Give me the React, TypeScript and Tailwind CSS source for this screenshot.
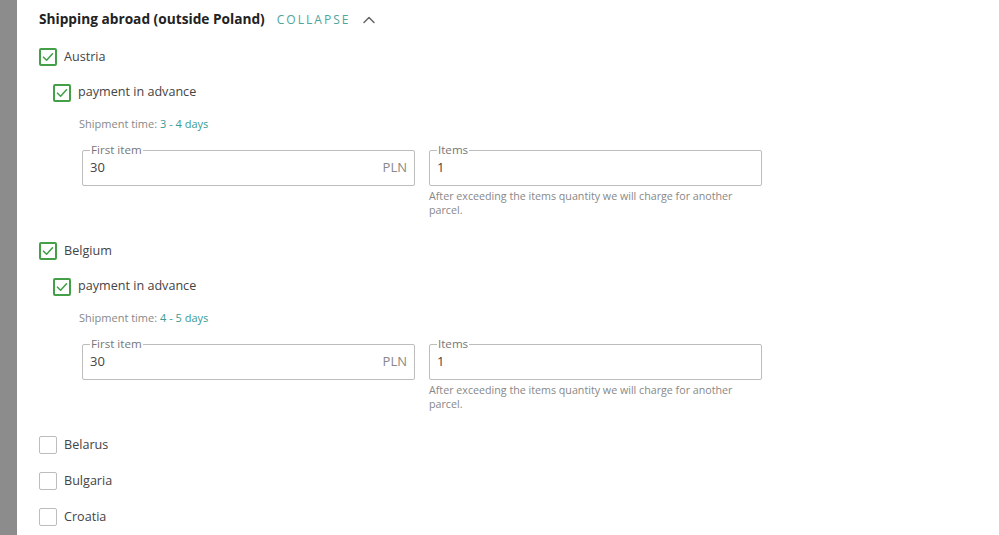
import { ChevronUp } from "lucide-react";

type Country = {
  name: string;
  checked: boolean;
  time?: string;
};

const countries: Country[] = [
  { name: "Austria", checked: true, time: "3 - 4 days" },
  { name: "Belgium", checked: true, time: "4 - 5 days" },
  { name: "Belarus", checked: false },
  { name: "Bulgaria", checked: false },
  { name: "Croatia", checked: false },
];

function Checkbox({ checked }: { checked: boolean }) {
  return (
    <span
      className={
        checked
          ? "flex h-[18px] w-[18px] shrink-0 items-center justify-center rounded-[2px] border-2 border-[#43a047] bg-white"
          : "flex h-[18px] w-[18px] shrink-0 items-center justify-center rounded-[2px] border border-[#bdbdbd] bg-white"
      }
    >
      {checked && (
        <svg width="12" height="12" viewBox="0 0 12 12" fill="none">
          <polyline
            points="1.5,6.2 4.6,9.2 10.5,2.8"
            stroke="#43a047"
            strokeWidth="1.6"
            strokeLinecap="round"
            strokeLinejoin="round"
          />
        </svg>
      )}
    </span>
  );
}

function OutlinedField({
  label,
  value,
  suffix,
}: {
  label: string;
  value: string;
  suffix?: string;
}) {
  return (
    <fieldset className="h-[42px] rounded-[2px] border border-[#bdbdbd] px-[7px] pb-[5px]">
      <legend className="px-[1px] text-[11.6px] leading-[12px] text-[#777]">
        {label}
      </legend>
      <div className="flex h-[24px] items-center justify-between text-[13px] text-[#444]">
        <span>{value}</span>
        {suffix && <span className="text-[#888]">{suffix}</span>}
      </div>
    </fieldset>
  );
}

function CountryBlock({ country }: { country: Country }) {
  return (
    <div>
      <label className="flex h-[36px] items-center gap-[7px] text-[12.6px] text-[#444]">
        <Checkbox checked={country.checked} />
        {country.name}
      </label>
      {country.checked && (
        <div className="pb-[16px]">
          <label className="flex h-[35px] items-center gap-[7px] pl-[14px] text-[12.6px] text-[#444]">
            <Checkbox checked />
            payment in advance
          </label>
          <div className="flex h-[28px] items-center pl-[40px] text-[11px] text-[#888]">
            Shipment time:&nbsp;
            <span className="text-[#3a9b94]">{country.time}</span>
          </div>
          <div className="mt-[6px] grid grid-cols-[333px_333px] gap-[14px] pl-[43px]">
            <OutlinedField label="First item" value="30" suffix="PLN" />
            <div>
              <OutlinedField label="Items" value="1" />
              <p className="mt-[3px] max-w-[330px] text-[10.7px] leading-[14px] text-[#888]">
                After exceeding the items quantity we will charge for another
                parcel.
              </p>
            </div>
          </div>
        </div>
      )}
    </div>
  );
}

export default function App() {
  return (
    <div className="flex min-h-screen bg-white font-['Open_Sans',sans-serif]">
      <div className="w-[17px] shrink-0 bg-[#8c8c8c]" />
      <div className="flex-1 pl-[22px]">
        <div className="flex h-[39px] items-center">
          <h2 className="text-[13.7px] font-bold text-[#222]">
            Shipping abroad (outside Poland)
          </h2>
          <button className="ml-[12px] flex items-center gap-[8px] text-[12px] tracking-[0.17em] text-[#4ea59c]">
            COLLAPSE
            <ChevronUp className="h-[20px] w-[20px] text-[#666]" strokeWidth={1.8} />
          </button>
        </div>
        {countries.map((c) => (
          <CountryBlock key={c.name} country={c} />
        ))}
      </div>
    </div>
  );
}
